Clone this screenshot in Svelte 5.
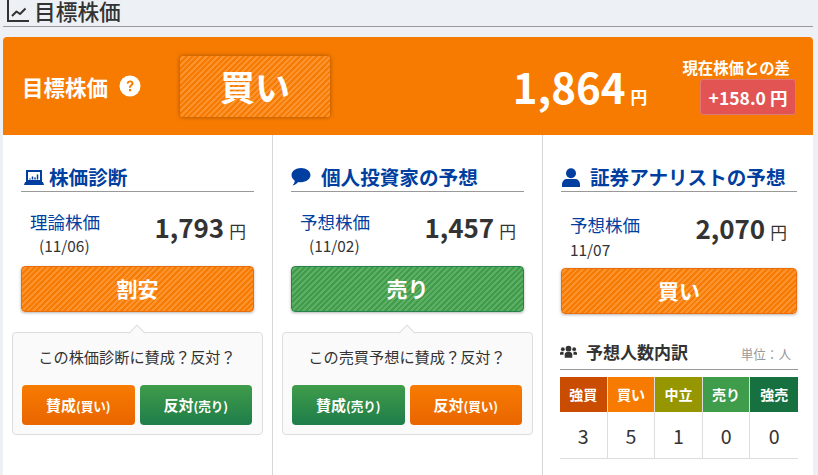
<script>
	const breakdown = [
		{ label: '強買', count: 3, color: '#c94c00' },
		{ label: '買い', count: 5, color: '#f77b00' },
		{ label: '中立', count: 1, color: '#969600' },
		{ label: '売り', count: 0, color: '#3f9c4a' },
		{ label: '強売', count: 0, color: '#167040' }
	];
</script>

<div class="page">
	<h2 class="heading">
		<svg class="chart-icon" viewBox="0 0 22 22" width="22" height="22">
			<path d="M1 0v21h21" fill="none" stroke="#333" stroke-width="2" />
			<path d="M5 16l4.500-4.500 3.500 2.500 5.500-5.500" fill="none" stroke="#333" stroke-width="2" stroke-linejoin="round" />
		</svg>
		<span>目標株価</span>
	</h2>

	<div class="card">
		<div class="summary">
			<span class="summary-title">目標株価</span>
			<svg class="help" viewBox="0 0 22 22" width="22" height="22">
				<circle cx="11" cy="11" r="10.500" fill="#fff" />
				<path d="M7.600 8.600c.2-2 1.700-3.100 3.500-3.100 2 0 3.400 1.200 3.400 2.900 0 2.300-2.600 2.400-2.600 4.300h-1.900c0-2.900 2.500-3 2.500-4.200 0-.7-.6-1.200-1.400-1.200-.9 0-1.500.5-1.600 1.500z" fill="#f77b00" />
				<rect x="10" y="14" width="2.100" height="2.300" fill="#f77b00" />
			</svg>
			<div class="rating-big stripe-orange">買い</div>
			<div class="summary-price"><b>1,864</b><span>円</span></div>
			<div class="diff">
				<span class="diff-label">現在株価との差</span>
				<span class="diff-badge">+158.0 円</span>
			</div>
		</div>

		<div class="cols">
			<section class="col">
				<h3 class="col-title">
					<svg viewBox="0 0 20 15" width="20" height="15" class="ic-laptop">
						<path d="M3 1h14v10H3z" fill="none" stroke="#003f9f" stroke-width="2" />
						<path d="M6 9.500v-1M8.500 9.500v-3M11 9.500v-2M13.500 9.500v-5" stroke="#003f9f" stroke-width="1.500" />
						<path d="M1 12h18l1 3H0z" fill="#003f9f" />
					</svg>
					株価診断
				</h3>
				<div class="price-row">
					<div class="price-label">理論株価<span class="date">(11/06)</span></div>
					<div class="price"><b>1,793</b><span>円</span></div>
				</div>
				<div class="rating stripe-orange">割安</div>
				<div class="vote">
					<p>この株価診断に賛成？反対？</p>
					<div class="vote-btns">
						<button class="orange">賛成<small>(買い)</small></button>
						<button class="green">反対<small>(売り)</small></button>
					</div>
				</div>
			</section>

			<section class="col">
				<h3 class="col-title">
					<svg viewBox="0 0 21 19" width="20" height="18">
						<path d="M10.500 0C16 0 20.500 3.200 20.500 7.500S16 15 10.500 15c-1 0-2-.1-2.900-.3C6.400 16 4.500 18 1.500 18.500c1.300-1.200 2.200-3 2.400-5C2 12.200.500 10 .500 7.500 .5 3.200 5 0 10.500 0z" fill="#003f9f" />
					</svg>
					<span class="wide">個人投資家の予想</span>
				</h3>
				<div class="price-row">
					<div class="price-label">予想株価<span class="date">(11/02)</span></div>
					<div class="price"><b>1,457</b><span>円</span></div>
				</div>
				<div class="rating stripe-green">売り</div>
				<div class="vote">
					<p>この売買予想に賛成？反対？</p>
					<div class="vote-btns">
						<button class="green">賛成<small>(売り)</small></button>
						<button class="orange">反対<small>(買い)</small></button>
					</div>
				</div>
			</section>

			<section class="col last">
				<h3 class="col-title">
					<svg viewBox="0 0 18 19" width="18" height="19">
						<circle cx="9" cy="5.200" r="5" fill="#003f9f" />
						<path d="M0 19v-2.500C0 13 2.500 11 5 11h8c2.500 0 5 2 5 5.500V19z" fill="#003f9f" />
					</svg>
					<span class="wide">証券アナリストの予想</span>
				</h3>
				<div class="price-row">
					<div class="price-label">予想株価<span class="date plain">11/07</span></div>
					<div class="price"><b>2,070</b><span>円</span></div>
				</div>
				<div class="rating stripe-orange">買い</div>

				<div class="count-head">
					<svg viewBox="0 0 18 13" width="17" height="13">
						<circle cx="9" cy="3.500" r="3" fill="#333" />
						<circle cx="3" cy="4" r="2" fill="#333" />
						<circle cx="15" cy="4" r="2" fill="#333" />
						<path d="M5 13V9.500C5 8 6 7 7.500 7h3C12 7 13 8 13 9.500V13zM0 10V8.500C0 7.500.7 6.800 1.700 6.800h2L3.800 10zM18 10V8.500c0-1-.7-1.700-1.700-1.700h-2l-.1 3.200z" fill="#333" />
					</svg>
					<span class="count-title">予想人数内訳</span>
					<span class="unit">単位：人</span>
				</div>
				<div class="count-table">
					{#each breakdown as item}
						<div class="count-col">
							<div class="count-label" style="background: {item.color}">{item.label}</div>
							<div class="count-value">{item.count}</div>
						</div>
					{/each}
				</div>
			</section>
		</div>
	</div>
</div>

<style>
	:global(body) {
		margin: 0;
		background: #edf0f4;
	}

	* {
		box-sizing: border-box;
	}

	.page {
		width: 818px;
		height: 475px;
		overflow: hidden;
		padding: 0 5px 0 3px;
		font-family: 'Noto Sans CJK JP', 'Noto Sans', sans-serif;
		color: #333;
	}

	.heading {
		display: flex;
		align-items: flex-start;
		gap: 5px;
		height: 27px;
		margin: 0 0 10px;
		padding: 0 0 0 4px;
		border-bottom: 1px solid #999;
		font-size: 21.700px;
		font-weight: 500;
		line-height: 21px;
	}

	.card {
		background: #fff;
		border-radius: 4px 4px 0 0;
		height: 438px;
	}

	.summary {
		display: flex;
		align-items: center;
		height: 98px;
		padding: 0 17px 0 19px;
		background: #f77b00;
		border-radius: 4px 4px 0 0;
		color: #fff;
	}

	.summary-title {
		font-size: 21.500px;
		font-weight: 700;
	}

	.help {
		margin-left: 11px;
	}

	.rating-big {
		width: 150px;
		height: 61px;
		margin: 1px 0 0 39px;
		border-radius: 3px;
		font-size: 35px;
		font-weight: 700;
		line-height: 60px;
		text-align: center;
		box-shadow: 0 0 4px rgba(120, 60, 0, 0.7);
	}

	.stripe-orange {
		background: repeating-linear-gradient(135deg, #f77b00 0 2px, #fb9430 2px 4px);
		color: #fff;
	}

	.stripe-green {
		background: repeating-linear-gradient(135deg, #3f9c4a 0 2px, #5fae66 2px 4px);
		color: #fff;
	}

	.summary-price {
		margin-left: auto;
		line-height: 1;
		white-space: nowrap;
	}

	.summary-price b {
		font-size: 42px;
		font-weight: 700;
	}

	.summary-price span {
		margin-left: 5px;
		font-size: 16.800px;
		font-weight: 700;
	}

	.diff {
		display: flex;
		flex-direction: column;
		align-items: flex-end;
		margin-left: 35px;
	}

	.diff-label {
		margin-right: 6px;
		font-size: 15.400px;
		font-weight: 700;
		line-height: 20px;
	}

	.diff-badge {
		width: 96px;
		height: 36px;
		margin-top: 2px;
		background: #e25454;
		border: 1px solid #e07878;
		border-radius: 3px;
		font-size: 17.500px;
		font-weight: 700;
		line-height: 35px;
		text-align: center;
	}

	.cols {
		display: grid;
		grid-template-columns: 270px 270px 270px;
		height: 340px;
	}

	.col {
		padding: 29px 18px 0 9px;
		border-right: 1px solid #d6d6d6;
	}

	.col.last {
		padding: 29px 16px 0 18px;
		border-right: none;
	}

	.col-title {
		display: flex;
		align-items: center;
		gap: 5px;
		height: 28px;
		margin: 0 0 0 9px;
		padding: 0 0 1px;
		border-bottom: 1px solid #999;
		color: #003f9f;
		font-size: 19.600px;
		font-weight: 700;
		line-height: 26px;
	}

	.col-title .wide {
		margin-left: 5px;
	}

	.col-title .ic-laptop {
		margin-left: 3px;
	}

	.col.last .col-title {
		margin-left: 0;
	}

	.col.last .col-title svg {
		margin-left: 1px;
	}

	.price-row {
		display: flex;
		align-items: center;
		justify-content: space-between;
		height: 74px;
		padding: 0 8px 0 18px;
	}

	.col.last .price-row {
		height: 76px;
		padding: 0 10px 0 9px;
	}

	.price-label {
		margin-top: 8px;
		color: #003f9f;
		font-size: 17.500px;
		line-height: 24px;
	}

	.col.last .price-label {
		margin-top: 12px;
	}

	.date {
		display: block;
		padding-left: 9px;
		color: #333;
		font-size: 15.400px;
		line-height: 22px;
	}

	.date.plain {
		padding: 1px 0 0;
	}

	.price {
		margin-bottom: 4px;
		line-height: 1;
		white-space: nowrap;
	}

	.price b {
		font-size: 26px;
		font-weight: 700;
	}

	.price span {
		margin-left: 5px;
		font-size: 16.800px;
	}

	.rating {
		height: 46px;
		margin-left: 9px;
		border: 1px solid;
		border-radius: 4px;
		font-size: 21px;
		font-weight: 700;
		line-height: 42px;
		text-align: center;
		box-shadow: 0 1px 3px rgba(0, 0, 0, 0.3);
	}

	.rating.stripe-orange {
		border-color: #e96d0c;
	}

	.rating.stripe-green {
		border-color: #26834a;
	}

	.col.last .rating {
		margin-left: 0;
	}

	.vote {
		position: relative;
		height: 103px;
		margin: 20px -9px 0 0;
		padding: 0 10px 0 9px;
		background: #fafafa;
		border: 1px solid #ddd;
		border-radius: 4px;
	}

	.vote::before {
		content: '';
		position: absolute;
		top: -6px;
		left: 118px;
		width: 11px;
		height: 11px;
		background: #fafafa;
		border: 1px solid #ddd;
		border-right: none;
		border-bottom: none;
		transform: rotate(45deg);
	}

	.vote p {
		margin: 0;
		padding-top: 12px;
		font-size: 15.200px;
		line-height: 22px;
		text-align: center;
	}

	.vote-btns {
		display: flex;
		gap: 5px;
		margin-top: 18px;
	}

	button {
		flex: 1;
		height: 40px;
		padding: 0 0 2px;
		border: none;
		border-radius: 4px;
		color: #fff;
		font-family: inherit;
		font-size: 15px;
		font-weight: 700;
	}

	button small {
		font-size: 12.600px;
	}

	.orange {
		background: linear-gradient(#f77b00, #e96500);
	}

	.green {
		background: linear-gradient(#3f9c4a, #1f7d4a);
	}

	.count-head {
		display: flex;
		align-items: center;
		height: 34px;
		margin: 22px -1px 0;
		padding-bottom: 3px;
		border-bottom: 1px solid #999;
	}

	.count-title {
		margin-left: 9px;
		font-size: 17px;
		font-weight: 700;
	}

	.unit {
		margin: 4px 7px 0 auto;
		color: #999;
		font-size: 12.600px;
	}

	.count-table {
		display: grid;
		grid-template-columns: repeat(5, 1fr);
		margin: 7px -1px 0;
		border-bottom: 1px solid #ddd;
	}

	.count-col {
		border-right: 1px solid #ddd;
	}

	.count-col:last-child {
		border-right: none;
	}

	.count-label {
		height: 35px;
		color: #fff;
		font-size: 14px;
		font-weight: 700;
		line-height: 35px;
		text-align: center;
	}

	.count-value {
		height: 46px;
		font-size: 19.600px;
		line-height: 47px;
		text-align: center;
	}
</style>
